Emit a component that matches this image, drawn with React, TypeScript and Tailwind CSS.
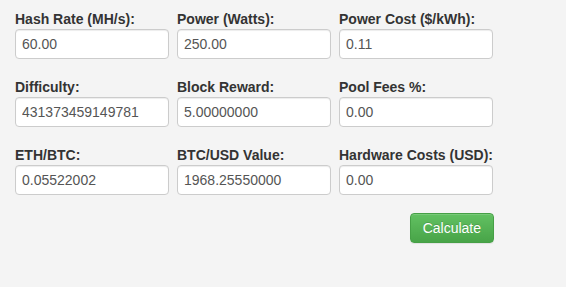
import React from 'react';

const fields = [
  { label: 'Hash Rate (MH/s):', value: '60.00' },
  { label: 'Power (Watts):', value: '250.00' },
  { label: 'Power Cost ($/kWh):', value: '0.11' },
  { label: 'Difficulty:', value: '431373459149781' },
  { label: 'Block Reward:', value: '5.00000000' },
  { label: 'Pool Fees %:', value: '0.00' },
  { label: 'ETH/BTC:', value: '0.05522002' },
  { label: 'BTC/USD Value:', value: '1968.25550000' },
  { label: 'Hardware Costs (USD):', value: '0.00' },
];

export default function App() {
  return (
    <div
      className="w-[566px] h-[287px] bg-[#f4f4f4] text-[#333] overflow-hidden"
      style={{ fontFamily: '"Liberation Sans", Arial, sans-serif' }}
    >
      <div className="pl-[15px] pt-[9px] w-[494px]">
        {/* Inputs */}
        <div className="grid grid-cols-[154px_154px_154px] gap-x-2 gap-y-[18px]">
          {fields.map((f) => (
            <div key={f.label} className="flex flex-col">
              <label className="text-[14px] font-bold leading-[20px] whitespace-nowrap">
                {f.label}
              </label>
              <input
                type="text"
                defaultValue={f.value}
                className="h-[30px] w-[154px] px-[6px] text-[14px] text-[#555] bg-white border border-[#ccc] rounded-[4px] shadow-[inset_0_1px_1px_rgba(0,0,0,0.075)] outline-none"
              />
            </div>
          ))}
        </div>

        {/* Action */}
        <div className="flex justify-end mt-[18px]">
          <button className="h-[30px] px-[12px] text-[14px] text-white rounded-[4px] border border-[#46a046] bg-gradient-to-b from-[#62c162] to-[#48a448] shadow-[inset_0_1px_0_rgba(255,255,255,0.15),0_1px_1px_rgba(0,0,0,0.075)] [text-shadow:0_-1px_0_rgba(0,0,0,0.15)]">
            Calculate
          </button>
        </div>
      </div>
    </div>
  );
}
